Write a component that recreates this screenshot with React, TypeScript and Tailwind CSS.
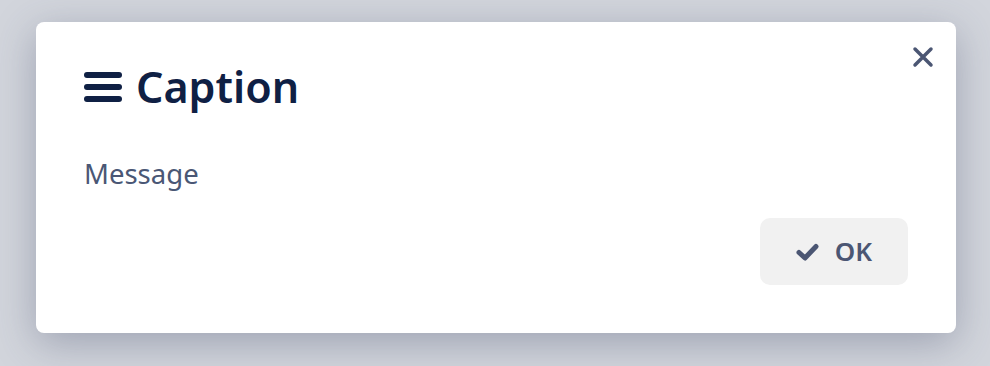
import React from "react";

function MenuIcon() {
  return (
    <svg width="38" height="30" viewBox="0 0 38 30" className="shrink-0">
      <rect x="0" y="0" width="38" height="6" rx="3" fill="currentColor" />
      <rect x="0" y="12" width="38" height="6" rx="3" fill="currentColor" />
      <rect x="0" y="24" width="38" height="6" rx="3" fill="currentColor" />
    </svg>
  );
}

export default function App() {
  return (
    <div
      className="h-[366px] w-full bg-[#d2d5dc] pl-9 pt-[22px]"
      style={{ fontFamily: '"Noto Sans", sans-serif' }}
    >
      <div className="relative flex h-[311px] w-[920px] flex-col rounded-lg bg-white px-12 pt-[35px] shadow-[0_10px_40px_rgba(60,70,100,0.35)]">
        <button className="absolute right-[22px] top-[24px] text-[#4b5673]">
          <svg width="22" height="22" viewBox="0 0 22 22">
            <path
              d="M3 3 L19 19 M19 3 L3 19"
              stroke="currentColor"
              strokeWidth="3.5"
              strokeLinecap="round"
            />
          </svg>
        </button>
        <div className="flex items-center gap-[14px] text-[#0f2044]">
          <MenuIcon />
          <h1 className="text-[43px] font-semibold leading-[60px]">Caption</h1>
        </div>
        <p className="mt-[39px] text-[27.5px] leading-[36px] text-[#4a5775]">Message</p>
        <div className="mt-[26px] flex justify-end">
          <button className="flex h-[67px] w-[148px] items-center justify-center gap-[16px] rounded-[10px] bg-[#f1f1f1] text-[26px] font-semibold text-[#4b5673]">
            <svg width="23" height="18" viewBox="0 0 23 18">
              <path
                d="M3 9.5 L9 15 L20 3.5"
                stroke="currentColor"
                strokeWidth="5"
                strokeLinecap="round"
                strokeLinejoin="round"
                fill="none"
              />
            </svg>
            OK
          </button>
        </div>
      </div>
    </div>
  );
}
